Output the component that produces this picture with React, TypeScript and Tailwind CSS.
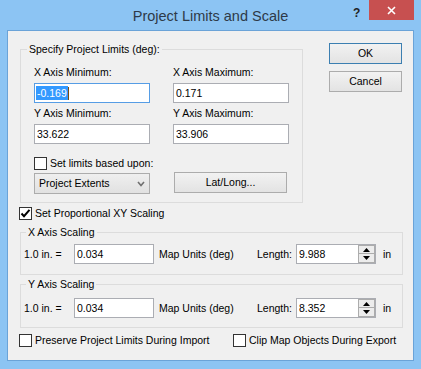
import React from "react";

const CheckBox = ({ checked }: { checked?: boolean }) => (
    <div className="w-[13px] h-[13px] border border-[#333333] bg-white flex items-center justify-center shrink-0">
        {checked && (
            <svg width="11" height="11" viewBox="0 0 11 11">
                <path d="M1.5 5.5 L4 8.2 L9.5 1.8" fill="none" stroke="#000" strokeWidth="2" />
            </svg>
        )}
    </div>
);

const TextBox = ({ value, width, focused }: { value: string; width: string; focused?: boolean }) => (
    <div
        className={`${width} h-[20px] bg-white border flex items-center pl-[1px] ${focused ? "border-[#569de5]" : "border-[#abadb3]"}`}
    >
        {focused ? (
            <>
                <span className="bg-[#3399ff] text-white leading-[14px] px-[1px]">{value}</span>
                <span className="w-[1px] h-[13px] bg-[#7a4a10]" />
            </>
        ) : (
            <span className="px-[1px]">{value}</span>
        )}
    </div>
);

const Button = ({ label, width, primary }: { label: string; width: string; primary?: boolean }) => (
    <div
        className={`${width} h-[21px] border bg-gradient-to-b from-[#f2f2f2] to-[#e3e3e3] flex items-center justify-center ${primary ? "border-[#3c7fb1]" : "border-[#acacac]"}`}
    >
        {label}
    </div>
);

const SpinBox = ({ value }: { value: string }) => (
    <div className="w-[80px] h-[20px] bg-white border border-[#abadb3] flex items-center pl-[2px]">
        <span className="flex-1">{value}</span>
        <div className="w-[17px] h-[18px] flex flex-col">
            <div className="h-[9px] border border-[#acacac] bg-[#ececec] flex items-center justify-center">
                <svg width="7" height="4" viewBox="0 0 7 4">
                    <path d="M0 4 L3.5 0 L7 4 Z" fill="#000" />
                </svg>
            </div>
            <div className="h-[9px] border border-t-0 border-[#acacac] bg-[#ececec] flex items-center justify-center">
                <svg width="7" height="4" viewBox="0 0 7 4">
                    <path d="M0 0 L7 0 L3.5 4 Z" fill="#000" />
                </svg>
            </div>
        </div>
    </div>
);

const ScaleGroup = ({ title, value, length, height, padTop }: { title: string; value: string; length: string; height: string; padTop: string }) => (
    <div className={`relative ml-[12px] w-[383px] ${height} border border-[#dcdcdc] ${padTop} pl-[3px]`}>
        <span className="absolute -top-[7px] left-[5px] px-[2px] bg-[#f0f0f0]">{title}</span>
        <div className="flex items-center">
            <span className="w-[50px]">1.0 in. =</span>
            <TextBox value={value} width="w-[80px]" />
            <span className="w-[103px] pl-[5px]">Map Units (deg)</span>
            <span className="w-[39px]">Length:</span>
            <SpinBox value={length} />
            <span className="ml-[7px]">in</span>
        </div>
    </div>
);

export default function App() {
    return (
        <div className="w-[421px] h-[369px] bg-[#8cc4f3] flex flex-col font-['Liberation_Sans',Arial,sans-serif] text-black">
            {/* caption */}
            <div className="relative h-[30px] flex items-center justify-center">
                <span className="text-[14.5px] text-[#2e3a48] leading-[18px] mt-[1px]">Project Limits and Scale</span>
                <span className="absolute left-[353px] top-[4px] text-[12px] font-bold text-[#222]">?</span>
                <div className="absolute left-[369px] top-0 w-[45px] h-[20px] bg-[#c75050] flex items-center justify-center">
                    <svg width="9" height="9" viewBox="0 0 9 9">
                        <path d="M1 1 L8 8 M8 1 L1 8" stroke="#fff" strokeWidth="1.6" />
                    </svg>
                </div>
            </div>

            {/* client */}
            <div className="ml-[7px] w-[407px] h-[331px] border border-[#6aa3d8] bg-[#f0f0f0] text-[10.5px] leading-[13px]">
                <div className="flex pl-[12px]">
                    <div className="relative mt-[18px] w-[283px] h-[154px] border border-[#dcdcdc] pl-[13px] pt-[16px]">
                        <span className="absolute -top-[7px] left-[6px] px-[2px] bg-[#f0f0f0]">Specify Project Limits (deg):</span>
                        <div className="grid grid-cols-[116px_116px] gap-x-[23px]">
                            <div className="flex flex-col gap-[4px]">
                                <span>X Axis Minimum:</span>
                                <TextBox value="-0.169" width="w-[116px]" focused />
                            </div>
                            <div className="flex flex-col gap-[4px]">
                                <span>X Axis Maximum:</span>
                                <TextBox value="0.171" width="w-[116px]" />
                            </div>
                            <div className="flex flex-col gap-[4px] mt-[4px]">
                                <span>Y Axis Minimum:</span>
                                <TextBox value="33.622" width="w-[116px]" />
                            </div>
                            <div className="flex flex-col gap-[4px] mt-[4px]">
                                <span>Y Axis Maximum:</span>
                                <TextBox value="33.906" width="w-[116px]" />
                            </div>
                        </div>
                        <div className="flex items-center gap-[3px] mt-[13px]">
                            <CheckBox />
                            <span>Set limits based upon:</span>
                        </div>
                        <div className="flex items-start gap-[24px] mt-[2px]">
                            <div className="mt-[1px] w-[116px] h-[21px] border border-[#acacac] bg-gradient-to-b from-[#efefef] to-[#e1e1e1] flex items-center pl-[4px] pr-[4px]">
                                <span className="flex-1">Project Extents</span>
                                <svg width="8" height="6" viewBox="0 0 8 6">
                                    <path d="M1 1 L4 4.5 L7 1" fill="none" stroke="#707070" strokeWidth="1.6" />
                                </svg>
                            </div>
                            <Button label="Lat/Long..." width="w-[113px]" />
                        </div>
                    </div>
                    <div className="ml-[26px] mt-[12px] flex flex-col gap-[7px]">
                        <Button label="OK" width="w-[73px]" primary />
                        <Button label="Cancel" width="w-[73px]" />
                    </div>
                </div>

                <div className="flex items-center gap-[3px] mt-[4px] pl-[11px] h-[13px]">
                    <CheckBox checked />
                    <span>Set Proportional XY Scaling</span>
                </div>

                <div className="mt-[12px]">
                    <ScaleGroup title="X Axis Scaling" value="0.034" length="9.988" height="h-[43px]" padTop="pt-[11px]" />
                </div>
                <div className="mt-[9px]">
                    <ScaleGroup title="Y Axis Scaling" value="0.034" length="8.352" height="h-[44px]" padTop="pt-[13px]" />
                </div>

                <div className="flex items-center mt-[6px] pl-[11px]">
                    <div className="w-[214px] flex items-center gap-[3px]">
                        <CheckBox />
                        <span>Preserve Project Limits During Import</span>
                    </div>
                    <div className="flex items-center gap-[3px]">
                        <CheckBox />
                        <span>Clip Map Objects During Export</span>
                    </div>
                </div>
            </div>
        </div>
    );
}
